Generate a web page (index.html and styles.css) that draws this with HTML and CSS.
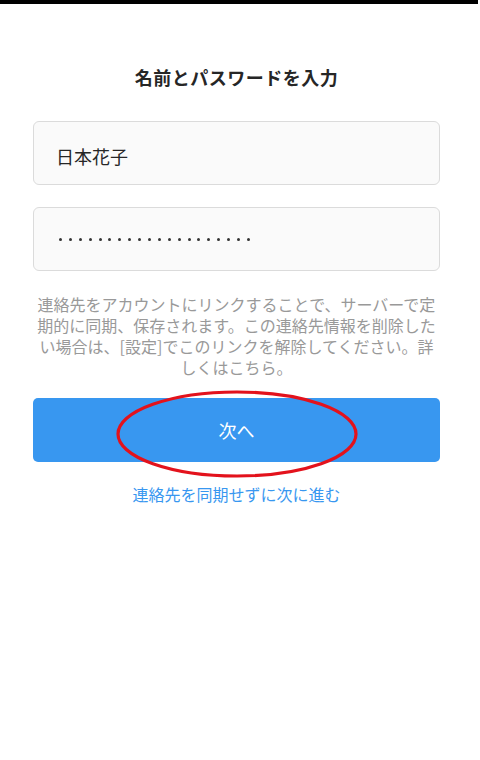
FILE: index.html
```html
<!DOCTYPE html>
<html lang="ja">
<head>
<meta charset="utf-8">
<link rel="stylesheet" href="styles.css">
</head>
<body>
<div class="topbar"></div>
<main class="page">
  <h1 class="title">名前とパスワードを入力</h1>
  <div class="field field-name">日本花子</div>
  <div class="field field-pass">
    <span class="dot"></span><span class="dot"></span><span class="dot"></span><span class="dot"></span><span class="dot"></span><span class="dot"></span><span class="dot"></span><span class="dot"></span><span class="dot"></span><span class="dot"></span><span class="dot"></span><span class="dot"></span><span class="dot"></span><span class="dot"></span><span class="dot"></span><span class="dot"></span><span class="dot"></span><span class="dot"></span><span class="dot"></span><span class="dot"></span>
  </div>
  <p class="note">連絡先をアカウントにリンクすることで、サーバーで定期的に同期、保存されます。この連絡先情報を削除したい場合は、[設定]でこのリンクを解除してください。詳しくはこちら。</p>
  <div class="btn-wrap">
    <div class="btn">次へ</div>
    <svg class="circle" width="250" height="96" viewBox="0 0 250 96" aria-hidden="true">
      <ellipse cx="125" cy="48" rx="119" ry="42" fill="none" stroke="#e3121c" stroke-width="3.2"/>
    </svg>
  </div>
  <div class="skip">連絡先を同期せずに次に進む</div>
</main>
</body>
</html>
```
FILE: styles.css
```css
html, body {
  margin: 0;
  padding: 0;
  background: #ffffff;
}
body {
  width: 480px;
  height: 760px;
  font-family: "Noto Sans CJK JP", "Noto Sans", sans-serif;
  overflow: hidden;
}
.topbar {
  width: 478px;
  height: 4px;
  background: #000000;
}
.page {
  width: 407px;
  margin-left: 33px;
  display: flex;
  flex-direction: column;
}
.title {
  margin: 61px 0 0 0;
  font-size: 18px;
  line-height: 24px;
  font-weight: 700;
  color: #262626;
  text-align: center;
  letter-spacing: 0.5px;
}
.field {
  box-sizing: border-box;
  height: 64px;
  border: 1px solid #dbdbdb;
  border-radius: 6px;
  background: #fafafa;
  display: flex;
  align-items: center;
  padding-left: 22px;
}
.field-name {
  margin-top: 32px;
  font-size: 18px;
  color: #262626;
  padding-top: 6px;
}
.field-pass {
  margin-top: 22px;
  padding-left: 25px;
  gap: 6.9px;
}
.dot {
  width: 3px;
  height: 3px;
  border-radius: 50%;
  background: #333333;
}
.note {
  margin: 23px 0 0 0;
  font-size: 16px;
  line-height: 21px;
  color: #999999;
  text-align: center;
}
.btn-wrap {
  position: relative;
  margin-top: 20px;
}
.btn {
  height: 64px;
  border-radius: 5px;
  background: #3897f0;
  color: #ffffff;
  font-size: 18px;
  display: flex;
  align-items: center;
  justify-content: center;
}
.circle {
  position: absolute;
  left: 79px;
  top: -12px;
}
.skip {
  margin-top: 21px;
  font-size: 16px;
  line-height: 22px;
  color: #3897f0;
  text-align: center;
}
```
